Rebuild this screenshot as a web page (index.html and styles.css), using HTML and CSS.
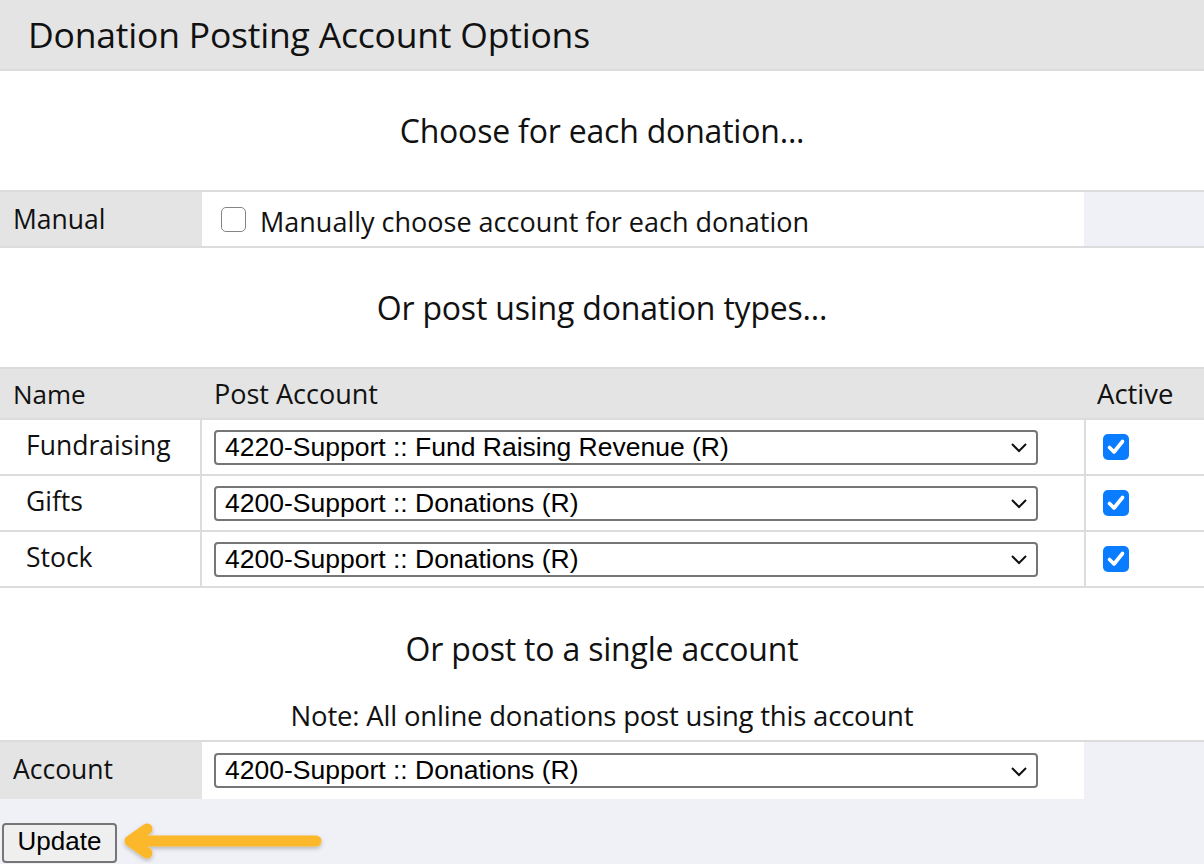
FILE: index.html
```html
<!DOCTYPE html>
<html>
<head>
	<title>Donation Posting Account Options</title>
	<link rel="stylesheet" href="styles.css">
</head>
<body>

	<div class="panel">

		<div class="panel-title">Donation Posting Account Options</div>

		<div class="panel-section panel-section-first">Choose for each donation...</div>

		<div class="panel-row panel-row-field">
			<div class="panel-cell panel-cell-label">Manual</div>
			<div class="panel-cell panel-cell-value">
				<span class="ui-check"></span>
				<span class="ui-check-text">Manually choose account for each donation</span>
			</div>
		</div>

		<div class="panel-section">Or post using donation types...</div>

		<div class="panel-row panel-row-head">
			<div class="panel-cell panel-cell-name">Name</div>
			<div class="panel-cell panel-cell-account">Post Account</div>
			<div class="panel-cell panel-cell-active">Active</div>
		</div>

		<div class="panel-row panel-row-data">
			<div class="panel-cell panel-cell-type">Fundraising</div>
			<div class="panel-cell panel-cell-account">
				<div class="ui-select">
					<span>4220-Support :: Fund Raising Revenue (R)</span>
					<svg class="ui-select-arrow" width="18" height="12" viewBox="0 0 18 12"><path d="M2 3 L9 10 L16 3" fill="none" stroke="#111" stroke-width="2"/></svg>
				</div>
			</div>
			<div class="panel-cell panel-cell-active">
				<span class="ui-check ui-check-on"><svg width="26" height="26" viewBox="0 0 26 26"><path d="M6.5 13.5 L11 18 L19.5 7.5" fill="none" stroke="#fff" stroke-width="3.6" stroke-linecap="round" stroke-linejoin="round"/></svg></span>
			</div>
		</div>

		<div class="panel-row panel-row-data">
			<div class="panel-cell panel-cell-type">Gifts</div>
			<div class="panel-cell panel-cell-account">
				<div class="ui-select">
					<span>4200-Support :: Donations (R)</span>
					<svg class="ui-select-arrow" width="18" height="12" viewBox="0 0 18 12"><path d="M2 3 L9 10 L16 3" fill="none" stroke="#111" stroke-width="2"/></svg>
				</div>
			</div>
			<div class="panel-cell panel-cell-active">
				<span class="ui-check ui-check-on"><svg width="26" height="26" viewBox="0 0 26 26"><path d="M6.5 13.5 L11 18 L19.5 7.5" fill="none" stroke="#fff" stroke-width="3.6" stroke-linecap="round" stroke-linejoin="round"/></svg></span>
			</div>
		</div>

		<div class="panel-row panel-row-data">
			<div class="panel-cell panel-cell-type">Stock</div>
			<div class="panel-cell panel-cell-account">
				<div class="ui-select">
					<span>4200-Support :: Donations (R)</span>
					<svg class="ui-select-arrow" width="18" height="12" viewBox="0 0 18 12"><path d="M2 3 L9 10 L16 3" fill="none" stroke="#111" stroke-width="2"/></svg>
				</div>
			</div>
			<div class="panel-cell panel-cell-active">
				<span class="ui-check ui-check-on"><svg width="26" height="26" viewBox="0 0 26 26"><path d="M6.5 13.5 L11 18 L19.5 7.5" fill="none" stroke="#fff" stroke-width="3.6" stroke-linecap="round" stroke-linejoin="round"/></svg></span>
			</div>
		</div>

		<div class="panel-section panel-section-single">
			<div class="panel-section-heading">Or post to a single account</div>
			<div class="panel-section-note">Note: All online donations post using this account</div>
		</div>

		<div class="panel-row panel-row-field panel-row-last">
			<div class="panel-cell panel-cell-label">Account</div>
			<div class="panel-cell panel-cell-value">
				<div class="ui-select">
					<span>4200-Support :: Donations (R)</span>
					<svg class="ui-select-arrow" width="18" height="12" viewBox="0 0 18 12"><path d="M2 3 L9 10 L16 3" fill="none" stroke="#111" stroke-width="2"/></svg>
				</div>
			</div>
		</div>
	</div>

	<div class="actions">
		<button class="ui-button" type="button">Update</button>
		<svg class="pointer" width="210" height="44" viewBox="0 0 210 44">
			<defs>
				<filter id="shadow" x="-10%" y="-40%" width="120%" height="180%">
					<feDropShadow dx="0" dy="2" stdDeviation="2" flood-color="#000" flood-opacity="0.25"/>
				</filter>
			</defs>
			<g filter="url(#shadow)" fill="none" stroke="#fbb829" stroke-width="11" stroke-linecap="round" stroke-linejoin="round">
				<path d="M14 20 L197 20"/>
				<path d="M28 8 L11 20 L28 32"/>
			</g>
		</svg>
	</div>

</body>
</html>
```

FILE: styles.css
```css
body {
	margin: 0px;
	padding: 0px;
	background: #f0f1f7;
	color: #111;
	font-family: "Open Sans", "Noto Sans", sans-serif;
}

.panel {
	width: 1204px;
}

.panel-title {
	height: 69px;
	line-height: 69px;
	padding-left: 28px;
	font-size: 35.5px;
	background: #e4e4e4;
	letter-spacing: -0.2px;
}

.panel-section {
	height: 119px;
	display: flex;
	align-items: center;
	justify-content: center;
	background: white;
	border-top: 2px solid #dcdcdc;
	font-size: 32px;
	letter-spacing: -0.2px;
}

.panel-section-first {
	height: 119px;
}

.panel-section-single {
	height: 152px;
	flex-direction: column;
	justify-content: flex-start;
}

.panel-section-heading {
	margin-top: 39px;
}

.panel-section-note {
	margin-top: 27px;
	font-size: 27.5px;
}

.panel-row {
	display: grid;
	grid-template-columns: 200px 884px 1fr;
	border-top: 2px solid #dcdcdc;
	font-size: 27px;
}

.panel-cell {
	display: flex;
	align-items: center;
}

.panel-row-field {
	height: 54px;
}

.panel-row-last {
	height: 57px;
}

.panel-cell-label {
	padding-left: 13px;
	background: #e4e4e4;
	font-size: 26.5px;
}

.panel-row-last .panel-cell-label {
	padding-bottom: 4px;
}

.panel-cell-value {
	background: white;
	border-left: 2px solid #e4e4e4;
	padding-left: 19px;
}

.panel-row-last .panel-cell-value {
	padding-left: 12px;
}

.panel-row-head {
	height: 49px;
	background: #e4e4e4;
}

.panel-row-head .panel-cell-name {
	padding-left: 13px;
	font-size: 26px;
}

.panel-row-head .panel-cell-account {
	padding-left: 12px;
	border-left: 2px solid #e4e4e4;
}

.panel-row-head .panel-cell-active {
	padding-left: 11px;
	border-left: 2px solid #e4e4e4;
	font-size: 27.5px;
}

.panel-row-data {
	height: 54px;
	background: white;
}

.panel-row-data:last-of-type {
	border-bottom: 2px solid #dcdcdc;
}

.panel-cell-type {
	padding-left: 26px;
	font-size: 26.5px;
	padding-bottom: 4px;
}

.panel-row-data .panel-cell-account {
	border-left: 2px solid #dcdcdc;
	padding-left: 12px;
}

.panel-row-data .panel-cell-active {
	border-left: 2px solid #dcdcdc;
	padding-left: 17px;
}

.ui-select {
	box-sizing: border-box;
	width: 824px;
	height: 35px;
	padding: 0px 8px 0px 9px;
	display: flex;
	align-items: center;
	justify-content: space-between;
	background: white;
	border: 2px solid #767676;
	border-radius: 4px;
	font-family: "Liberation Sans", Arial, sans-serif;
	font-size: 26.5px;
	color: #000;
}

.ui-select-arrow {
	display: block;
}

.ui-check {
	box-sizing: border-box;
	width: 25px;
	height: 25px;
	display: block;
	border: 1.5px solid #858585;
	border-radius: 5px;
	background: white;
}

.ui-check-on {
	width: 26px;
	height: 26px;
	border: none;
	background: #0a7cff;
}

.ui-check-on svg {
	display: block;
}

.ui-check-text {
	margin-left: 14px;
	margin-top: 4px;
}

.actions {
	display: flex;
	align-items: center;
	padding: 21px 0px 0px 2px;
}

.ui-button {
	width: 115px;
	height: 40px;
	margin: 0px;
	padding: 0px 0px 3px 0px;
	background: #efefef;
	border: 2px solid #767676;
	border-radius: 4px;
	font-family: "Liberation Sans", Arial, sans-serif;
	font-size: 26px;
	color: #000;
}

.pointer {
	display: block;
	margin-left: 2px;
	margin-top: 1px;
}
```
